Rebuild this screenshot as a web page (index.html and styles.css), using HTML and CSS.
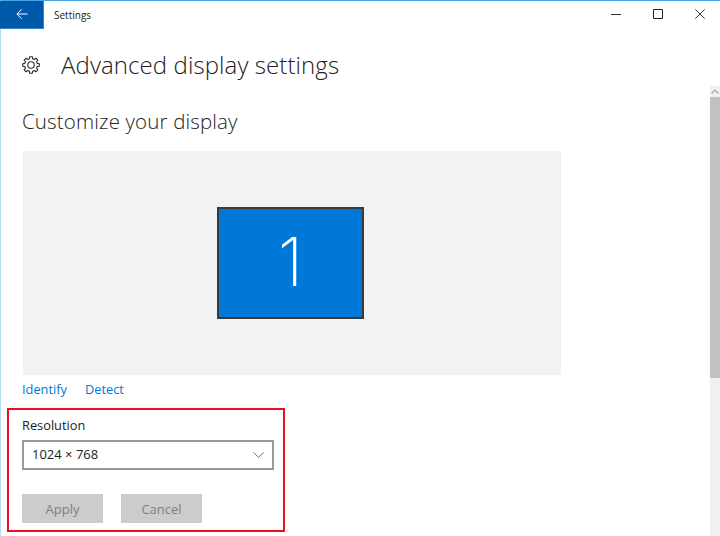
FILE: index.html
```html
<!DOCTYPE html>
<html lang="en">
<head>
<meta charset="utf-8">
<title>Settings</title>
<link rel="stylesheet" href="styles.css">
</head>
<body>
<div class="window">
  <header class="titlebar">
    <button class="back" aria-label="Back">
      <svg width="12" height="12" viewBox="0 0 12 12"><path d="M11.500 6H1M5.600 1.200 .9 6l4.700 4.800" fill="none" stroke="#fff" stroke-width="1"/></svg>
    </button>
    <span class="app-name">Settings</span>
    <div class="controls">
      <svg class="ctl" width="10" height="10" viewBox="0 0 10 10"><path d="M0 5.500h10" stroke="#333" stroke-width="1"/></svg>
      <svg class="ctl" width="10" height="10" viewBox="0 0 10 10"><path d="M.5.500h9v9h-9z" fill="none" stroke="#222" stroke-width="1"/></svg>
      <svg class="ctl" width="10" height="10" viewBox="0 0 10 10"><path d="M.3.300l9.400 9.400M9.700.300.3 9.700" stroke="#333" stroke-width="1"/></svg>
    </div>
  </header>
  <div class="body">
    <main class="content">
      <div class="page-head">
        <svg class="gear" width="18" height="18" viewBox="0 0 18 18"><g fill="none" stroke="#2b2b2b" stroke-width="1.100" stroke-linejoin="round"><path d="M15.180 7.340 17.300 7.690V10.310L15.180 10.660 14.540 12.200 15.800 13.940 13.940 15.800 12.200 14.540 10.660 15.180 10.310 17.300H7.690L7.340 15.180 5.800 14.540 4.060 15.800 2.200 13.940 3.460 12.200 2.820 10.660 .7 10.310V7.690L2.820 7.340 3.460 5.800 2.200 4.060 4.060 2.200 5.800 3.460 7.340 2.820 7.690 .7H10.310L10.660 2.820 12.200 3.460 13.940 2.200 15.800 4.060 14.540 5.800Z"/><circle cx="9" cy="9" r="3.200"/></g></svg>
        <h1 class="page-title">Advanced display settings</h1>
      </div>
      <h2 class="section-title">Customize your display</h2>
      <div class="display-area">
        <div class="monitor"><span class="monitor-num">1</span></div>
      </div>
      <div class="links">
        <a class="link">Identify</a>
        <a class="link">Detect</a>
      </div>
      <section class="highlight">
        <div class="res-label">Resolution</div>
        <div class="select">
          <span class="select-value">1024 × 768</span>
          <svg width="11" height="6" viewBox="0 0 11 6"><path d="M.4.400 5.500 5.400 10.600.4" fill="none" stroke="#777" stroke-width="1"/></svg>
        </div>
        <div class="buttons">
          <div class="btn">Apply</div>
          <div class="btn">Cancel</div>
        </div>
      </section>
    </main>
    <aside class="scrollbar">
      <div class="arrow"><svg width="8" height="5" viewBox="0 0 8 5"><path d="M.5 4.500 4 1l3.500 3.500" fill="none" stroke="#a6a6a6" stroke-width="1.200"/></svg></div>
      <div class="thumb"></div>
      <div class="track"></div>
    </aside>
  </div>
</div>
</body>
</html>
```
FILE: styles.css
```css
* { box-sizing: border-box; }
html, body { margin: 0; padding: 0; height: 100%; overflow: hidden; background: #fff; }
body { font-family: "Open Sans", "Noto Sans", sans-serif; color: #222; }
.window {
  width: 720px; height: 536px;
  border-top: 1px solid #4aa3e6;
  border-left: 1px solid #b5dcf7;
  display: flex; flex-direction: column;
}
.titlebar { height: 28px; display: flex; align-items: center; flex: none; }
.back {
  width: 44px; height: 28px; margin: 0 0 0 -1px; padding: 0 0 1px; border: 0;
  border-right: 1px solid #2f86cf; border-bottom: 1px solid #2f86cf;
  background: #0058a8; display: flex; align-items: center; justify-content: center;
}
.app-name { font-size: 10px; margin-left: 10px; margin-bottom: 1px; color: #222; }
.controls { margin-left: auto; display: flex; gap: 32px; padding-right: 15px; margin-bottom: 2px; }
.ctl { display: block; }
.body { flex: 1; display: flex; min-height: 0; }
.content { flex: 1; min-width: 0; padding-left: 21px; }
.page-head { display: flex; align-items: center; height: 36px; margin-top: 18px; }
.gear { margin-right: 21px; }
.page-title { margin: 0; font-size: 24px; font-weight: 300; color: #222; line-height: 36px; letter-spacing: .09px; }
.section-title { margin: 0; font-size: 20.5px; font-weight: 300; color: #222; line-height: 28px; margin-top: 24px; letter-spacing: .15px; }
.display-area {
  width: 538px; height: 224px; margin: 16px 0 0 1px; background: #f2f2f2;
  display: flex; align-items: flex-start; justify-content: center; padding: 56px 3px 0 0;
}
.monitor {
  width: 147px; height: 112px; background: #0078d7; border: 2px solid #3a3a3a;
  display: flex; align-items: center; justify-content: center;
}
.monitor-num { font-family: "Inter", sans-serif; font-size: 67px; font-weight: 200; color: #fff; line-height: 1; margin-bottom: 4px; }
.links { display: flex; gap: 18px; margin-top: 4px; height: 20px; line-height: 20px; }
.link { font-size: 12.8px; color: #0078d7; }
.highlight {
  width: 278px; height: 124px; margin: 9px 0 0 -15px; padding: 6px 0 0 13px;
  border: 2px solid #e81123;
}
.res-label { font-size: 12.8px; line-height: 18px; color: #222; }
.select {
  width: 252px; height: 30px; margin-top: 6px; padding: 0 8px 0 8px;
  border: 2px solid #999; display: flex; align-items: center; justify-content: space-between;
  font-size: 13px; color: #222;
}
.select-value { margin-bottom: 2px; }
.buttons { display: flex; gap: 18px; margin-top: 24px; }
.btn {
  width: 81px; height: 29px; background: #ccc; color: #808080;
  font-size: 13px; display: flex; align-items: center; justify-content: center;
}
.scrollbar { width: 10px; flex: none; margin-top: 57px; display: flex; flex-direction: column; }
.arrow { height: 11px; background: #f0f0f0; display: flex; align-items: center; justify-content: center; }
.thumb { height: 281px; background: #c1c1c1; flex: none; }
.track { flex: 1; background: #f0f0f0; }
```
